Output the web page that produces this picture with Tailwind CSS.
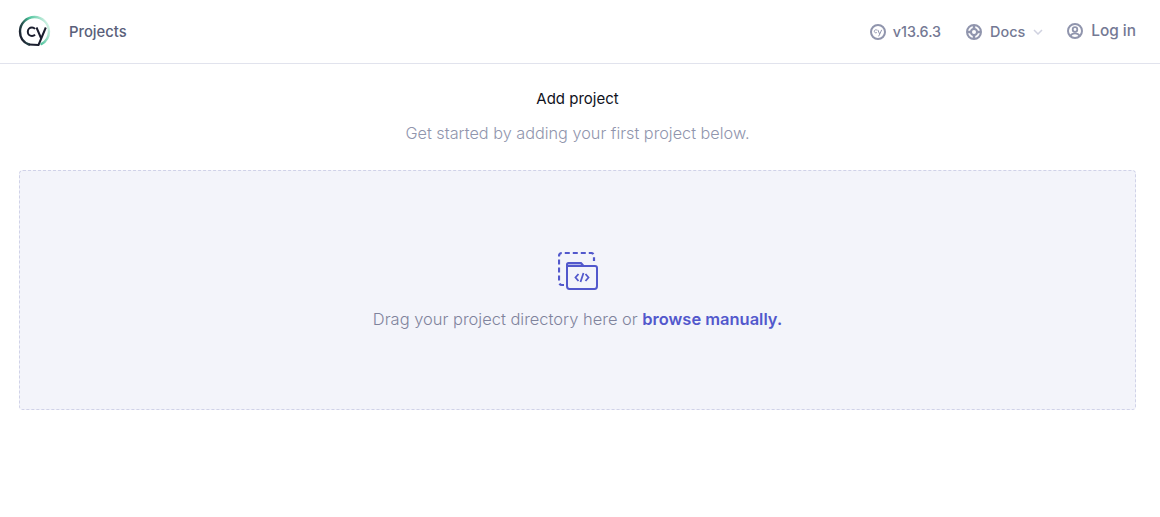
<!DOCTYPE html>
<html lang="en">
<head>
    <meta charset="UTF-8">
    <meta name="viewport" content="width=device-width, initial-scale=1.0">
    <title>Projects</title>
    <script src="https://cdn.jsdelivr.net/npm/@tailwindcss/browser@4"></script>
</head>
<body class="bg-white font-['Inter',sans-serif]">
    <!-- Top nav -->
    <header class="h-16 border-b border-[#e1e3ed] flex items-center justify-between pl-[18px] pr-6">
        <div class="flex items-center gap-[18px]">
            <svg class="-mt-[2px]" width="33" height="33" viewBox="0 0 33 33" fill="none">
                <defs>
                    <linearGradient id="ring" x1="3" y1="24" x2="31" y2="12" gradientUnits="userSpaceOnUse">
                        <stop offset="0" stop-color="#1b1e2e"/>
                        <stop offset="0.25" stop-color="#2a5a55"/>
                        <stop offset="0.5" stop-color="#4ac29a"/>
                        <stop offset="1" stop-color="#d5f3e6"/>
                    </linearGradient>
                </defs>
                <path d="M11 30.500C5.500 28.500 2 23.500 2 17.500C2 9.500 8.500 3 16.500 3C24.500 3 31 9.500 31 17.500C31 23 28 27.500 23.500 30" stroke="url(#ring)" stroke-width="2.400" stroke-linecap="round"/>
                <path d="M17 15C16.300 14.100 15.200 13.600 14 13.600C11.700 13.600 9.800 15.400 9.800 17.800C9.800 20.200 11.700 22 14 22C15.200 22 16.300 21.500 17 20.600" stroke="#1b1e2e" stroke-width="2"/>
                <path d="M18.500 13.500L23.200 24.500M27.800 13.500L20.500 31L11 30.500" stroke="#1b1e2e" stroke-width="2" stroke-linejoin="round"/>
            </svg>
            <span class="mt-[2px] text-[14.8px] font-medium text-[#5a5f7a]">Projects</span>
        </div>
        <nav class="flex items-center font-medium text-[#747994]">
            <a class="flex items-center gap-[7px] mr-[25px] mt-px text-[14.3px]">
                <svg width="16" height="16" viewBox="0 0 16 16" fill="none">
                    <circle cx="8" cy="8" r="7" stroke="#9095ad" stroke-width="2"/>
                    <path d="M7 6.300C6.600 5.900 6.200 5.800 5.800 5.800C4.900 5.800 4.300 6.500 4.300 7.300C4.300 8.100 4.900 8.800 5.800 8.800C6.200 8.800 6.600 8.700 7 8.300" stroke="#9095ad" stroke-width="1"/>
                    <path d="M7.800 5.800L9.700 10.200L8.600 12.300M11.700 5.800L9.700 10.200" stroke="#9095ad" stroke-width="1"/>
                </svg>
                v13.6.3
            </a>
            <a class="flex items-center gap-2 mr-6 mt-px text-[14.4px]">
                <svg width="16" height="16" viewBox="0 0 16 16" fill="none">
                    <circle cx="8" cy="8" r="7" stroke="#9095ad" stroke-width="2"/>
                    <circle cx="8" cy="8" r="3" stroke="#9095ad" stroke-width="2"/>
                    <path d="M8 1V5M8 11V15M1 8H5M11 8H15" stroke="#9095ad" stroke-width="2.500"/>
                </svg>
                Docs
                <svg width="10" height="6" viewBox="0 0 10 6" fill="none">
                    <path d="M1 1L5 5L9 1" stroke="#d0d2e0" stroke-width="1.500"/>
                </svg>
            </a>
            <a class="flex items-center gap-2 -mt-px text-[15.4px]">
                <svg width="16" height="16" viewBox="0 0 16 16" fill="none">
                    <circle cx="8" cy="8" r="7" stroke="#9095ad" stroke-width="2"/>
                    <circle cx="8" cy="6.500" r="2.300" stroke="#9095ad" stroke-width="1.800"/>
                    <path d="M3.500 12.800C4.500 11 6 10.400 8 10.400C10 10.400 11.500 11 12.500 12.800" stroke="#9095ad" stroke-width="1.800"/>
                </svg>
                Log in
            </a>
        </nav>
    </header>

    <main class="pl-[19px] pr-6">
        <h1 class="mt-6 text-[15px] leading-[22px] text-center text-[#10121c]">Add project</h1>
        <p class="mt-[9px] text-[16.25px] leading-7 font-light text-center text-[#9095ad]">Get started by adding your first project below.</p>

        <!-- Drop zone -->
        <div class="mt-[23px] h-[240px] rounded border border-dashed border-[#d0d2e8] bg-[#f3f4fa] flex flex-col items-center pt-[81px]">
            <svg width="40" height="38" viewBox="0 0 40 38" fill="none">
                <path d="M6 33H4C2.300 33 1 31.700 1 30V4C1 2.300 2.300 1 4 1H33C34.700 1 36 2.300 36 4V9" stroke="#5258cc" stroke-width="2.200" stroke-dasharray="5 3"/>
                <path d="M9 11H23L25.500 14H9V11Z" fill="#b5b8e8"/>
                <path d="M9 14V12.500C9 11.500 9.500 11 10.500 11H23L25.500 14H37C38.300 14 39 14.700 39 16V34C39 35.800 38 37 36.500 37H11.500C10 37 9 35.800 9 34V14H25.500" stroke="#5258cc" stroke-width="2" stroke-linejoin="round"/>
                <path d="M20.500 22L17.500 25.500L20.500 29M27.500 22L30.500 25.500L27.500 29M25.500 21L22.500 30" stroke="#5258cc" stroke-width="1.800"/>
            </svg>
            <p class="mt-[15px] text-[16.47px] leading-7 font-light text-[#7f839c]">Drag your project directory here or <a class="font-semibold text-[#5258cc]">browse manually.</a></p>
        </div>
    </main>
</body>
</html>
